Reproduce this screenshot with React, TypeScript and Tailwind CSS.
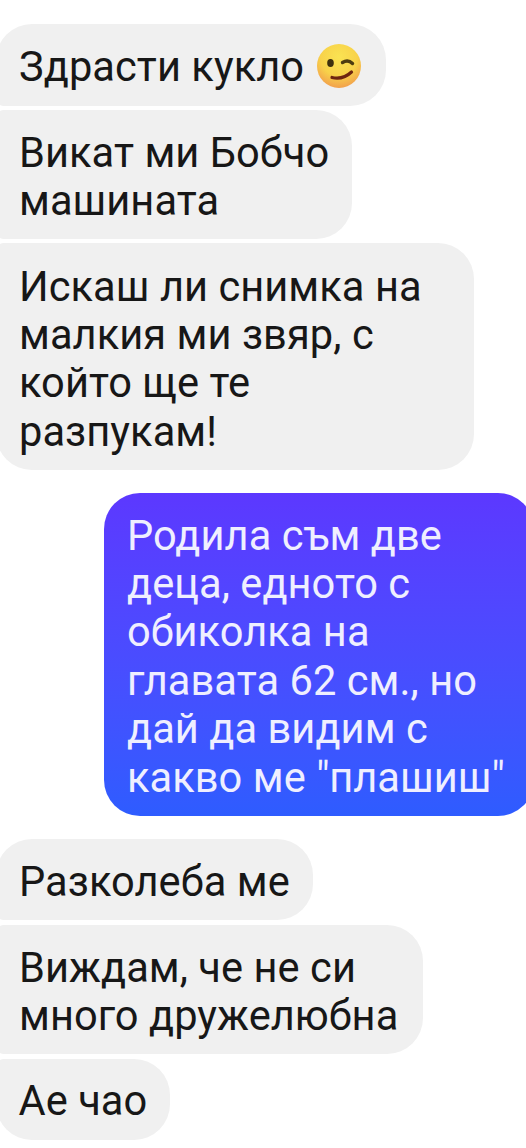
import type { ReactNode } from 'react';

const WinkFace = () => {
  return (
    <svg viewBox="0 0 46 46" className="w-[46px] h-[46px] shrink-0" role="img" aria-label="wink">
      <defs>
        <radialGradient id="face" cx="50%" cy="30%" r="70%">
          <stop offset="0%" stopColor="#fae352" />
          <stop offset="60%" stopColor="#f8d24a" />
          <stop offset="100%" stopColor="#f2a04c" />
        </radialGradient>
      </defs>
      <circle cx="23" cy="23" r="22" fill="url(#face)" />
      <ellipse cx="14.5" cy="20" rx="3.3" ry="4.1" fill="#3d300e" />
      <path d="M26.5 19.5 Q32 16 36.5 20.5" fill="none" stroke="#4d3c10" strokeWidth="3.4" strokeLinecap="round" />
      <path d="M16 34.5 Q27 37 35.5 29" fill="none" stroke="#6e2510" strokeWidth="3.2" strokeLinecap="round" />
    </svg>
  );
};

type BubbleProps = {
  className: string;
  lines: string[];
  children?: ReactNode;
};

const Bubble = ({ className, lines, children }: BubbleProps) => {
  return (
    <div className={`flex shrink-0 whitespace-nowrap ${className}`}>
      <p>
        {lines.map((line) => (
          <span key={line} className="block">{line}</span>
        ))}
      </p>
      {children}
    </div>
  );
};

const App = () => {
  return (
    <main className="w-[526px] h-[1148px] overflow-hidden bg-white pt-6 flex flex-col items-start font-[Roboto,sans-serif] text-[41.6px] leading-[48.4px] tracking-[0.06px] text-[#171717]">
      {/* Received */}
      <Bubble
        className="-ml-1 w-[390px] h-[82px] pl-[23px] pt-[19px] bg-[#f0f0f0] rounded-[36px] rounded-bl-lg"
        lines={['Здрасти кукло']}
      >
        <div className="ml-3"><WinkFace /></div>
      </Bubble>
      <Bubble
        className="-ml-1 mt-1 w-[356px] h-[129px] pl-[23px] pt-[18.5px] bg-[#f0f0f0] rounded-l-lg rounded-r-[36px]"
        lines={['Викат ми Бобчо', 'машината']}
      />
      <Bubble
        className="-ml-1 mt-1 w-[478px] h-[227px] pl-[23px] pt-[19.5px] bg-[#f0f0f0] rounded-[36px] rounded-tl-lg"
        lines={['Искаш ли снимка на', 'малкия ми звяр, с', 'който ще те', 'разпукам!']}
      />

      {/* Sent */}
      <Bubble
        className="ml-[104px] mt-[23px] w-[430px] h-[323px] pl-[23px] pt-[18.5px] rounded-[36px] bg-linear-to-b from-[#5c38ff] to-[#2e5cff] text-[#efefff]"
        lines={['Родила съм две', 'деца, едното с', 'обиколка на', 'главата 62 см., но', 'дай да видим с', 'какво ме "плашиш"']}
      />

      {/* Received */}
      <Bubble
        className="-ml-1 mt-[23px] w-[317px] h-[81px] pl-[23px] pt-[18.5px] bg-[#f0f0f0] rounded-[36px] rounded-bl-lg"
        lines={['Разколеба ме']}
      />
      <Bubble
        className="-ml-1 mt-[5px] w-[427px] h-[129px] pl-[23px] pt-[18.5px] bg-[#f0f0f0] rounded-l-lg rounded-r-[36px]"
        lines={['Виждам, че не си', 'много дружелюбна']}
      />
      <Bubble
        className="-ml-1 mt-[5px] w-[174px] h-[81px] pl-[22.5px] pt-[17.5px] bg-[#f0f0f0] rounded-[36px] rounded-tl-lg"
        lines={['Ае чао']}
      />
    </main>
  );
};

export default App;
